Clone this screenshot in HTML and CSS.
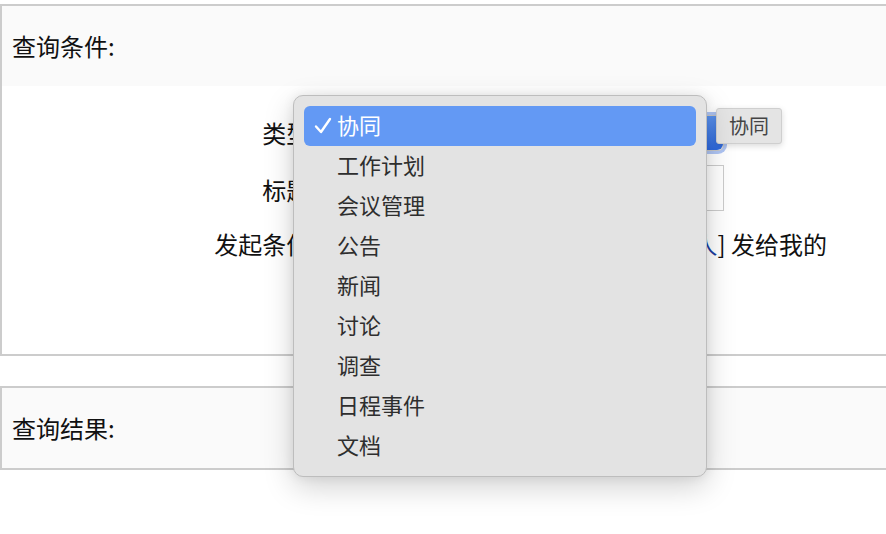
FILE: index.html
```html
<!DOCTYPE html>
<html lang="zh">
<head>
<meta charset="utf-8">
<link rel="stylesheet" href="styles.css">
</head>
<body>
<div class="panel">
  <div class="panel-head">查询条件:</div>
  <div class="panel-body">
    <div class="form">
      <div class="label">类型:</div>
      <div class="field">
        <div class="select"><span class="select-btn"></span></div>
      </div>
      <div class="label lbl2">标题:</div>
      <div class="field"><div class="input"></div></div>
      <div class="label lbl3">发起条件:</div>
      <div class="field lbl3"><div class="cond">[<span class="link">我发起的</span>] [<span class="link">指定发起人</span>] 发给我的</div></div>
    </div>
  </div>
</div>
<div class="panel second">
  <div class="panel-head">查询结果:</div>
</div>

<div class="tooltip">协同</div>

<div class="popup">
  <div class="item selected"><svg class="check" width="18" height="18" viewBox="0 0 18 18"><path d="M2 9.5 L7 15 L16 2" fill="none" stroke="#fff" stroke-width="2.4" stroke-linecap="round" stroke-linejoin="round"/></svg>协同</div>
  <div class="item">工作计划</div>
  <div class="item">会议管理</div>
  <div class="item">公告</div>
  <div class="item">新闻</div>
  <div class="item">讨论</div>
  <div class="item">调查</div>
  <div class="item">日程事件</div>
  <div class="item">文档</div>
</div>
</body>
</html>
```

FILE: styles.css
```css
html, body {
  margin: 0;
  padding: 0;
  background: #ffffff;
}
body {
  font-family: "Noto Sans CJK SC", "Noto Sans", sans-serif;
  font-size: 24px;
  color: #111;
  padding-top: 4px;
  overflow: hidden;
  width: 886px;
  height: 534px;
}
.panel {
  border: 2px solid #cccccc;
  border-right: none;
}
.panel.second {
  margin-top: 30px;
}
.panel-head {
  background: #fafafa;
  height: 80px;
  display: flex;
  align-items: center;
  padding-left: 10px;
  line-height: 1;
}
.panel-body {
  height: 268px;
  background: #fff;
}
.form {
  display: grid;
  grid-template-columns: 315px 1fr;
  grid-template-rows: 54px 53px 54px;
  padding-top: 20px;
  align-items: center;
}
.label {
  text-align: right;
  line-height: 1;
  white-space: nowrap;
}
.lbl2 {
  padding-top: 7px;
}
.lbl3 {
  padding-top: 8px;
}
.field {
  display: flex;
  align-items: center;
}
.select {
  width: 405px;
  height: 34px;
  border-radius: 6px;
  background: #fff;
  border: 1px solid #c8c8c8;
  display: flex;
  justify-content: flex-end;
  box-shadow: 0 0 0 3px rgba(110, 150, 235, 0.55);
}
.select-btn {
  width: 24px;
  height: 34px;
  border-radius: 0 6px 6px 0;
  background: linear-gradient(#5b93ef, #2f6ae0);
}
.input {
  width: 405px;
  height: 44px;
  border: 1px solid #cccccc;
  margin-top: 3px;
}
.cond {
  width: 510px;
  text-align: right;
  line-height: 1;
  white-space: nowrap;
}
.link {
  color: #1d3ea0;
}
.tooltip {
  position: absolute;
  left: 716px;
  top: 108px;
  width: 64px;
  height: 34px;
  background: #e4e4e4;
  border: 1px solid #cfcfcf;
  border-radius: 3px;
  box-shadow: 0 2px 6px rgba(0,0,0,0.15);
  color: #444;
  font-size: 20px;
  display: flex;
  align-items: center;
  justify-content: center;
  line-height: 1;
}
.popup {
  position: absolute;
  left: 293px;
  top: 95px;
  width: 392px;
  height: 360px;
  padding: 10px;
  background: #e3e3e3;
  border: 1px solid #bdbdbd;
  border-radius: 10px;
  box-shadow: 0 10px 30px rgba(0,0,0,0.18), 0 0 12px rgba(0,0,0,0.08);
  font-size: 22px;
}
.item {
  height: 40px;
  box-sizing: border-box;
  padding-bottom: 4px;
  display: flex;
  align-items: center;
  padding-left: 33px;
  color: #2e2e2e;
  line-height: 1;
  position: relative;
}
.item.selected {
  background: #6399f4;
  color: #fff;
  border-radius: 6px;
}
.check {
  position: absolute;
  left: 10px;
  top: 11px;
}
```
